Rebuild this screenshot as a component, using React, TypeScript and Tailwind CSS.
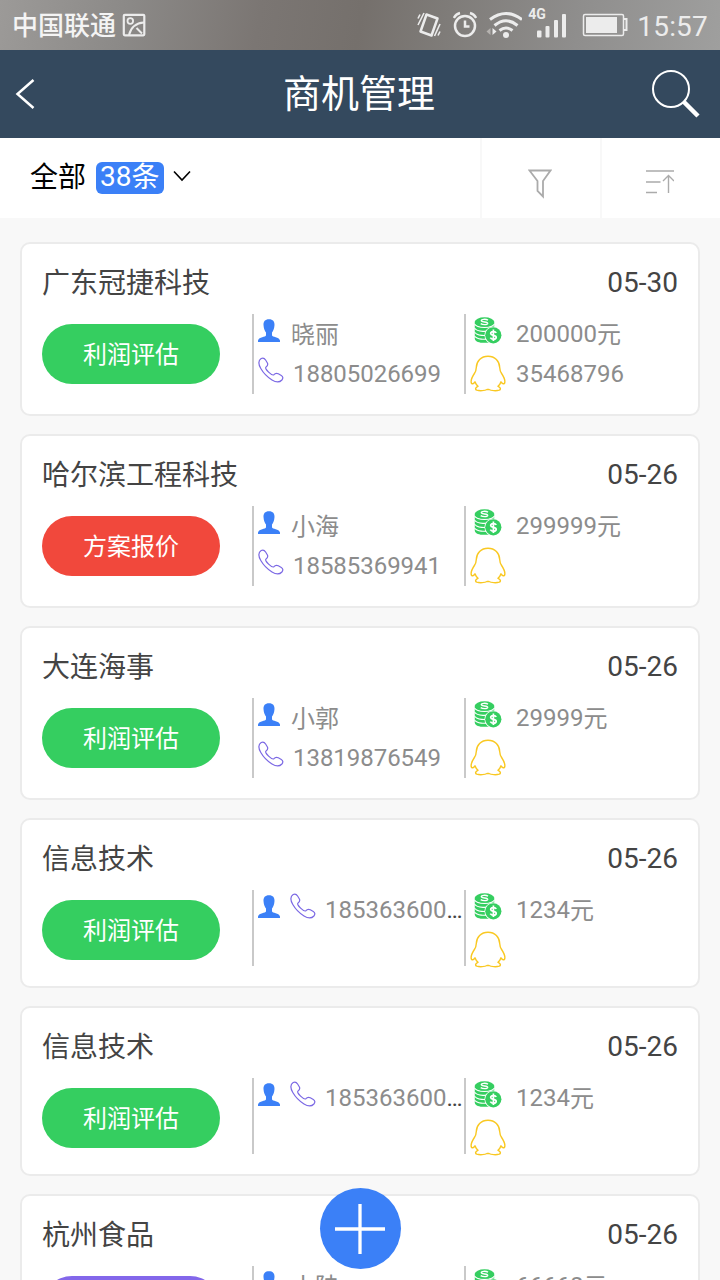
import React from "react";

type Lead = {
  company: string;
  date: string;
  status: string;
  tone: "green" | "red" | "violet";
  contact?: string;
  phone: string;
  amount: string;
  qq?: string;
};

const leads: Lead[] = [
  { company: "广东冠捷科技", date: "05-30", status: "利润评估", tone: "green", contact: "晓丽", phone: "18805026699", amount: "200000", qq: "35468796" },
  { company: "哈尔滨工程科技", date: "05-26", status: "方案报价", tone: "red", contact: "小海", phone: "18585369941", amount: "299999" },
  { company: "大连海事", date: "05-26", status: "利润评估", tone: "green", contact: "小郭", phone: "13819876549", amount: "29999" },
  { company: "信息技术", date: "05-26", status: "利润评估", tone: "green", phone: "185363600", amount: "1234" },
  { company: "信息技术", date: "05-26", status: "利润评估", tone: "green", phone: "185363600", amount: "1234" },
  { company: "杭州食品", date: "05-26", status: "", tone: "violet", contact: "小陆", phone: "", amount: "66668" },
];

const tones = {
  green: "bg-[#35ce60]",
  red: "bg-[#f1483c]",
  violet: "bg-[#8367ea]",
};

function StatusBar() {
  return (
    <div className="flex h-[50px] shrink-0 items-center bg-[linear-gradient(100deg,#9c9a98_0%,#8b8987_18%,#7b7673_36%,#75706c_50%,#7f7c79_62%,#8f8e8d_80%,#9f9f9e_100%)] pl-3 pr-3 text-[#ececec]">
      <span className="pt-px text-[26px] font-medium leading-[50px] text-[#f4f4f4]">中国联通</span>
      <svg className="ml-[6px] h-6 w-6" viewBox="0 0 24 24" fill="none" stroke="currentColor" strokeWidth="2.2">
        <rect x="1.8" y="1.800" width="20.500" height="20.500" rx="1" />
        <circle cx="8.300" cy="8" r="2.800" strokeWidth="1.8" />
        <path d="M7 22C9 14 13.500 10 22 9.500M14.500 15L20 20.500" strokeWidth="2" />
      </svg>
      <svg className="ml-auto h-7 w-6" viewBox="0 0 24 28" fill="none" stroke="currentColor" strokeWidth="2">
        <path d="M9.500 3.500L20.500 7.500 14.500 24.500 3.500 20.500Z" strokeWidth="2.500" strokeLinejoin="round" />
        <path d="M1 7.500l2-4M1 14l6-12M17.500 25l5.500-12M21 24.500l2-4" strokeWidth="1.600" />
      </svg>
      <svg className="ml-3 h-7 w-6" viewBox="0 0 24 28" fill="none" stroke="currentColor" strokeWidth="2.500">
        <circle cx="12" cy="15" r="10" />
        <path d="M12 9.500V15.500h4.500M.8 7Q3 3 7 2M23.200 7Q21 3 17 2" />
      </svg>
      <svg className="ml-[9px] h-7 w-9" viewBox="0 0 36 28" fill="none" stroke="currentColor" strokeWidth="3">
        <path d="M4 8.500Q20 -3.500 36 8.500M8.500 14.500Q20 5 31.500 14.500M13.500 19.500Q20 14.500 26.500 19.500" />
        <circle cx="20" cy="24" r="3" fill="currentColor" stroke="none" />
        <path d="M4.500 17v7L.5 20.500Z" fill="#b5b2af" stroke="none" />
        <path d="M6.500 17v7L10.500 20.500Z" fill="currentColor" stroke="none" />
      </svg>
      <div className="ml-[6px] flex h-9 w-[40px] items-end">
        <span className="-mr-[9px] self-start font-['Roboto'] text-[14px] font-bold leading-[15px]">4G</span>
        <svg className="mb-[5px] h-7 w-[30px] shrink-0" viewBox="0 0 30 28" fill="currentColor">
          <rect x="0" y="20.500" width="4.500" height="7" rx="1" />
          <rect x="8.500" y="16" width="4" height="11.500" rx="1" />
          <rect x="17" y="10" width="4" height="17.500" rx="1" />
          <rect x="25" y="4" width="4" height="23.500" rx="1" />
        </svg>
      </div>
      <svg className="ml-[14px] h-6 w-[46px]" viewBox="0 0 46 24" fill="none" stroke="currentColor">
        <rect x="1.500" y="1.500" width="40" height="21" rx="1.500" strokeWidth="1.500" />
        <rect x="4" y="4" width="31" height="16" fill="currentColor" stroke="none" />
        <path d="M42 6h2.500v11H42" strokeWidth="2" />
      </svg>
      <span className="ml-[9px] pt-[3px] font-['Roboto'] text-[28px] leading-[47px] tracking-[0.2px]">15:57</span>
    </div>
  );
}

function PersonIcon() {
  return (
    <svg className="mt-[5px] h-6 w-[22px] shrink-0" viewBox="0 0 22 24" fill="#3b80f7">
      <path d="M11 .3C15 .3 16.700 2.600 16.500 6C16.300 9.500 15.200 12 14 13.500V16.300C14.300 18.500 21 17.500 22 21.500V23H0V21.500C1 17.500 7.700 18.500 8 16.300V13.500C6.800 12 5.700 9.500 5.500 6C5.300 2.600 7 .3 11 .3Z" />
    </svg>
  );
}

function PhoneIcon() {
  return (
    <svg className="mt-[3px] h-[26px] w-[26px] shrink-0" viewBox="0 0 26 26" fill="none" stroke="#7b68e4" strokeWidth="1.200" strokeLinejoin="round">
      <path d="M3.200 1.500C5 .5 6.500 1.200 7.600 3L9.400 6C10.200 7.700 9.500 9 8 10.100C7 11 8.400 13 10.600 15.200C13 17.500 14.700 18.800 15.900 17.700C17.200 16.200 18.600 16 20.300 16.800L23.300 18.500C25.200 19.700 25.300 21.400 23.900 23C21.700 25.400 18 25.500 14 23C9.600 20.200 5.400 16 2.800 11.500C.2 7 .2 3.500 3.200 1.500Z" />
    </svg>
  );
}

function CoinsIcon() {
  return (
    <svg className="mt-[3px] h-7 w-7 shrink-0" viewBox="0 0 28 28" fill="none">
      <path d="M.8 4.500V22C2 26 10 26.700 16.500 25V10H20.200V4.500Z" fill="#35ce60" />
      <path d="M.5 7C3 11.500 18 11.500 20.500 7M.5 11C3 15.200 14 15.500 20 12M.5 15C3 19 12 19.200 15 17.500M.5 19C3 22.500 11 23 15 21.500" stroke="white" strokeWidth="1.100" />
      <ellipse cx="10.500" cy="5" rx="9.700" ry="4.700" fill="#35ce60" />
      <path d="M14 3.200C11.500 1.700 7 2.200 7.300 3.900C7.600 5.500 13.900 4.500 13.700 6.400C13.400 8.200 8.300 7.800 6.700 6.600" stroke="white" strokeWidth="1.400" />
      <circle cx="19.300" cy="18.300" r="8.900" fill="white" />
      <circle cx="19.300" cy="18.300" r="8.100" fill="#35ce60" />
      <path d="M22.300 15.900C21 13.900 16.600 14.300 16.700 16.600C16.900 19 22.200 17.700 22.200 20.300C22.200 22.900 17.700 22.900 16.300 20.600M19.400 12.500V24" stroke="white" strokeWidth="1.700" />
    </svg>
  );
}

function PenguinIcon() {
  return (
    <svg className="mt-px h-[37px] w-9 shrink-0" viewBox="0 0 36 37" fill="none" stroke="#f9c822" strokeWidth="1.400" strokeLinejoin="round">
      <path d="M18 1.200C11 1.200 6.500 6.200 6.300 12.500C6.200 15 5.800 16.500 4.400 18.500C2.200 21.800 .8 25 1.200 27.500C1.700 29.800 3.800 28.800 5 26.800C5.600 28.700 6.500 30 8 31.300C5.500 32.300 4.800 34.400 6.800 35.200C9.500 36 15 35.800 17 34.500H19C21 35.800 26.500 36 29.200 35.200C31.200 34.400 30.500 32.300 28 31.300C29.500 30 30.400 28.700 31 26.800C32.200 28.800 34.300 29.800 34.800 27.500C35.200 25 33.800 21.800 31.600 18.500C30.200 16.500 29.800 15 29.700 12.500C29.500 6.200 25 1.200 18 1.200Z" />
    </svg>
  );
}

function LeadCard({ lead }: { lead: Lead }) {
  const bodyHeight = lead.contact ? "h-20" : "h-[76px]";
  return (
    <article className="shrink-0 rounded-[10px] border-2 border-[#ebebeb] bg-white px-5 pb-5">
      <div className="flex h-[70px] justify-between text-[28px] leading-[78px] text-[#444]">
        <h2 className="pt-px">{lead.company}</h2>
        <time>{lead.date}</time>
      </div>
      <div className={`flex ${bodyHeight} text-2xl leading-10 text-[#8c8c8c]`}>
        <div className="w-[210px] shrink-0">
          <div className={`mt-[10px] h-[60px] w-[178px] rounded-full pt-px text-center leading-[60px] text-white ${tones[lead.tone]}`}>
            {lead.status}
          </div>
        </div>
        <div className="w-[212px] shrink-0 border-l-2 border-[#c9c9c9] pl-1">
          {lead.contact ? (
            <>
              <div className="flex h-10">
                <PersonIcon />
                <span className="ml-[11px] pt-px">{lead.contact}</span>
              </div>
              {lead.phone && (
                <div className="flex h-10">
                  <PhoneIcon />
                  <span className="ml-[9px] tracking-[-0.04px]">{lead.phone}</span>
                </div>
              )}
            </>
          ) : (
            <div className="flex h-10">
              <PersonIcon />
              <div className="ml-[10px] flex">
                <PhoneIcon />
                <span className="ml-[9px]">{lead.phone}</span>
                <span className="text-[#444]">…</span>
              </div>
            </div>
          )}
        </div>
        <div className="min-w-0 grow border-l-2 border-[#c9c9c9] pl-1">
          <div className="flex h-10">
            <span className="flex w-[46px] shrink-0 pl-1">
              <CoinsIcon />
            </span>
            <span>{lead.amount}</span>
            <span className="pt-px">元</span>
          </div>
          <div className="flex h-9">
            <span className="flex w-[46px] shrink-0">
              <PenguinIcon />
            </span>
            <span>{lead.qq}</span>
          </div>
        </div>
      </div>
    </article>
  );
}

export default function App() {
  return (
    <div className="relative flex h-[1280px] w-[720px] flex-col overflow-hidden bg-[#f8f8f8] font-['Roboto','Noto_Sans_CJK_SC',sans-serif]">
      <StatusBar />
      <header className="flex h-[88px] shrink-0 items-center bg-[#34495e] pl-[15px] pr-5 text-white">
        <button className="flex w-[50px]" aria-label="返回">
          <svg className="h-8 w-5" viewBox="0 0 20 32" fill="none" stroke="currentColor" strokeWidth="2.500">
            <path d="M18.500 2L2.500 16 18.500 30" />
          </svg>
        </button>
        <h1 className="grow pl-[3px] text-center text-[38px] leading-[84px]">商机管理</h1>
        <button className="flex w-[50px]" aria-label="搜索">
          <svg className="h-[50px] w-[50px]" viewBox="0 0 50 50" fill="none" stroke="currentColor">
            <circle cx="21" cy="20" r="18" strokeWidth="2" />
            <path d="M33.500 32.500L48 47" strokeWidth="4.500" />
          </svg>
        </button>
      </header>
      <div className="flex h-20 shrink-0 bg-white">
        <button className="flex w-[480px] items-center pl-[30px] text-[28px] leading-10 text-black">
          <span>全部</span>
          <span className="ml-[10px] flex h-8 rounded-md bg-[#3b80f7] px-1 leading-[30px] text-white">
            <span>38</span>
            <span className="pt-px">条</span>
          </span>
          <svg className="-mt-1 ml-[9px] h-3 w-[18px]" viewBox="0 0 18 12" fill="none" stroke="currentColor" strokeWidth="1.600">
            <path d="M1 1.500L9 10 17 1.500" />
          </svg>
        </button>
        <button className="flex w-[120px] items-center justify-center border-l-2 border-[#f8f8f8] pr-[2px] pt-[12px]" aria-label="筛选">
          <svg className="h-[30px] w-6" viewBox="0 0 24 30" fill="none" stroke="#ababab" strokeWidth="1.800">
            <path d="M1.500 1.500H22.500L15 12V27.500L9.500 22V12Z" />
          </svg>
        </button>
        <button className="flex w-[120px] items-center justify-center border-l-2 border-[#f8f8f8] pr-[2px] pt-2" aria-label="排序">
          <svg className="h-6 w-7" viewBox="0 0 28 24" fill="none" stroke="#ababab" strokeWidth="1.400">
            <path d="M0 1H28M0 12H14.500M0 22.500H11M22.500 23V5.500M17 11L22.500 5.500 28 11" />
          </svg>
        </button>
      </div>
      <main className="flex min-h-0 grow flex-col gap-[18px] overflow-hidden px-5 pt-6">
        {leads.map((lead, i) => (
          <LeadCard key={i} lead={lead} />
        ))}
      </main>
      <button className="absolute left-[319.500px] top-[1188px] flex h-[81px] w-[81px] items-center justify-center rounded-full bg-[#3b80f7]" aria-label="新建">
        <svg className="h-[50px] w-[50px]" viewBox="0 0 50 50" stroke="white" strokeWidth="3.300">
          <path d="M25 0V50M0 25H50" />
        </svg>
      </button>
    </div>
  );
}
